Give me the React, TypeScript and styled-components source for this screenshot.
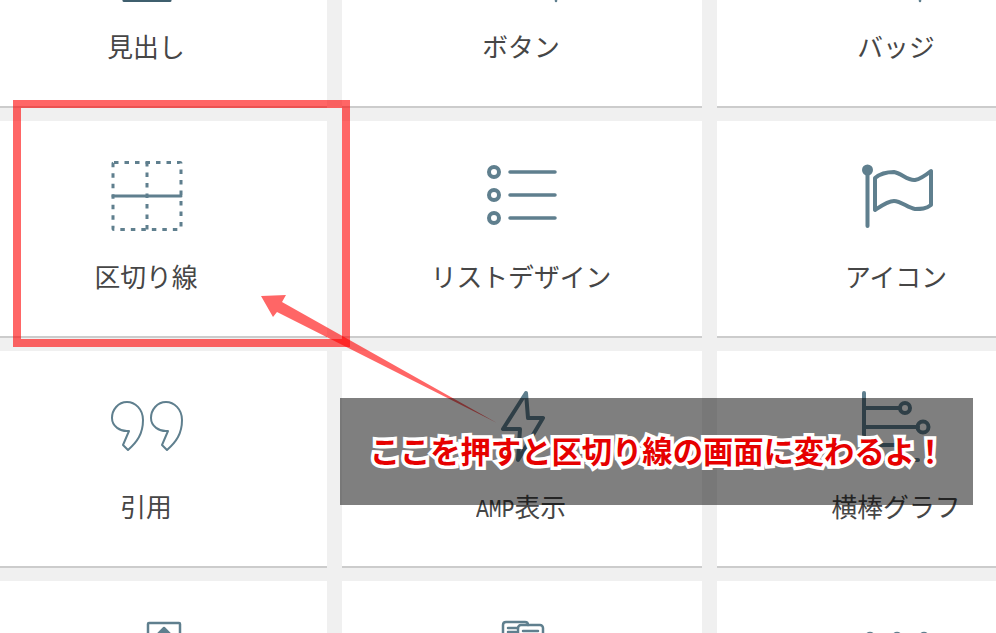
import styled, { createGlobalStyle } from "styled-components";

const GlobalStyle = createGlobalStyle`
  html, body {
    margin: 0;
    padding: 0;
    background: #f0f0f0;
  }
`;

const Screen = styled.div`
  position: relative;
  width: 996px;
  height: 633px;
  overflow: hidden;
  background: #f0f0f0;
  font-family: "Noto Sans CJK JP", "Noto Sans", sans-serif;
`;

const Grid = styled.div`
  display: grid;
  grid-template-columns: repeat(3, 360px);
  grid-auto-rows: 217px;
  column-gap: 15px;
  row-gap: 13px;
  margin: -109px 0 0 -33px;
`;

const Card = styled.div`
  display: flex;
  flex-direction: column;
  align-items: center;
  box-sizing: border-box;
  padding-top: 39px;
  background: #fff;
  border-bottom: 2px solid #ccc;
`;

const Icon = styled.svg`
  display: block;
  flex: none;
  width: 72px;
  height: 72px;
  overflow: visible;
  fill: none;
  stroke: #5f7f8e;
  stroke-linecap: round;
  stroke-linejoin: round;
`;

const Label = styled.div`
  margin-top: 26px;
  padding-right: 2px;
  font-size: 25.8px;
  line-height: 36px;
  font-weight: 400;
  color: #464646;
  white-space: nowrap;
`;

const Mono = styled.span`
  display: inline-block;
  margin-right: -8px;
  font-family: "Liberation Mono", monospace;
  transform: scaleX(0.83);
  transform-origin: left center;
`;

const Highlight = styled.div`
  position: absolute;
  left: 13px;
  top: 100px;
  width: 337px;
  height: 247px;
  box-sizing: border-box;
  border: 8px solid rgba(255, 0, 0, 0.6);
`;

const Arrow = styled.svg`
  position: absolute;
  left: 0;
  top: 0;
  width: 996px;
  height: 633px;
`;

const Banner = styled.div`
  position: absolute;
  left: 340px;
  top: 398px;
  width: 633px;
  height: 107px;
  display: flex;
  align-items: center;
  justify-content: center;
  background: rgba(0, 0, 0, 0.5);
`;

const BannerText = styled.span`
  margin: 0 0 2px 2px;
  font-size: 30.3px;
  line-height: 1;
  font-weight: 700;
  color: #e60000;
  white-space: nowrap;
  -webkit-text-stroke: 7px #fff;
  paint-order: stroke fill;
`;

const HeadingIcon = () => (
  <Icon viewBox="0 0 72 72" strokeWidth={3}>
    <path d="M13 70.5H59" stroke="#3f5f6e" />
  </Icon>
);

const ButtonIcon = () => (
  <Icon viewBox="0 0 72 72" strokeWidth={2.5}>
    <path d="M70 69V71" />
  </Icon>
);

const BadgeIcon = () => (
  <Icon viewBox="0 0 72 72" strokeWidth={2.5}>
    <path d="M59 69V71" />
  </Icon>
);

const DividerIcon = () => (
  <Icon viewBox="0 0 72 72" strokeWidth={3}>
    <rect x="2" y="2.5" width="68" height="67" rx="1" strokeLinecap="butt" strokeDasharray="4.5 6" />
    <path d="M36 2V70" strokeLinecap="butt" strokeDasharray="4.5 6" />
    <path d="M2 36H70" />
  </Icon>
);

const ListIcon = () => (
  <Icon viewBox="0 0 72 72" strokeWidth={4}>
    <circle cx="8" cy="12" r="5" />
    <circle cx="8" cy="35" r="5" />
    <circle cx="8" cy="58" r="5" />
    <path d="M24 12H69M24 35H69M24 58H69" strokeWidth={3.5} />
  </Icon>
);

const FlagIcon = () => (
  <Icon viewBox="0 0 72 72" strokeWidth={4}>
    <circle cx="6.5" cy="10" r="3.5" fill="#5f7f8e" />
    <path d="M6.5 10V66" />
    <path d="M14 18C20 13 27 12 33 12C40 13 47 21 54 20C60 19 65 15 70 11V45C65 49 60 49 54 49C47 48 40 41 33 41C27 41 20 46 14 50Z" />
  </Icon>
);

const QuoteIcon = () => (
  <Icon viewBox="0 0 72 72" strokeWidth={2}>
    <path d="M12 55L17 60C26 52 32 44 32 30C32 19 24 12 16 12C7 12 1 20 1 28C1 36 9 42 18 41Z" />
    <path d="M51 55L56 60C65 52 71 44 71 30C71 19 63 12 55 12C46 12 40 20 40 28C40 36 48 42 57 41Z" />
  </Icon>
);

const BoltIcon = () => (
  <Icon viewBox="0 0 72 72" strokeWidth={4}>
    <path d="M40 3L17 39H34L32 70L57 28H42Z" />
  </Icon>
);

const BarIcon = () => (
  <Icon viewBox="0 0 72 72" strokeWidth={4}>
    <path d="M3 3V70H57M3 18H39M3 37H57M3 55H34" />
    <circle cx="44" cy="18" r="5" />
    <circle cx="62" cy="37" r="5.5" />
  </Icon>
);

const ImageIcon = () => (
  <Icon viewBox="0 0 72 72" strokeWidth={2.5}>
    <rect x="37" y="3" width="32" height="40" rx="1" />
    <path d="M53 8L46 15H60Z" fill="#5f7f8e" />
  </Icon>
);

const CardsIcon = () => (
  <Icon viewBox="0 0 72 72" strokeWidth={2.5}>
    <path d="M17 40V5C17 3 18 2 20 2H39C41 2 42 3 42 5" />
    <rect x="32" y="5" width="25" height="30" rx="3" />
    <path d="M22 8H32M22 12H30M37 11H52" />
  </Icon>
);

const DotsIcon = () => (
  <Icon viewBox="0 0 72 72" strokeWidth={2.5}>
    <circle cx="9" cy="17" r="4" fill="#5f7f8e" />
    <circle cx="36" cy="17" r="4" fill="#5f7f8e" />
    <circle cx="63" cy="17" r="4" fill="#5f7f8e" />
  </Icon>
);

const items = [
  { icon: <HeadingIcon />, label: "見出し" },
  { icon: <ButtonIcon />, label: "ボタン" },
  { icon: <BadgeIcon />, label: "バッジ" },
  { icon: <DividerIcon />, label: "区切り線" },
  { icon: <ListIcon />, label: "リストデザイン" },
  { icon: <FlagIcon />, label: "アイコン" },
  { icon: <QuoteIcon />, label: "引用" },
  {
    icon: <BoltIcon />,
    label: (
      <>
        <Mono>AMP</Mono>表示
      </>
    ),
  },
  { icon: <BarIcon />, label: "横棒グラフ" },
  { icon: <ImageIcon />, label: "" },
  { icon: <CardsIcon />, label: "" },
  { icon: <DotsIcon />, label: "" },
];

const App = () => {
  return (
    <Screen>
      <GlobalStyle />
      <Grid>
        {items.map((item, i) => (
          <Card key={i}>
            {item.icon}
            <Label>{item.label}</Label>
          </Card>
        ))}
      </Grid>
      <Highlight />
      <Arrow viewBox="0 0 996 633">
        <path
          d="M261 296L286 295L282 302L497 423L277 312L273 317Z"
          fill="rgba(255, 0, 0, 0.6)"
        />
      </Arrow>
      <Banner>
        <BannerText>ここを押すと区切り線の画面に変わるよ！</BannerText>
      </Banner>
    </Screen>
  );
};

export default App;
